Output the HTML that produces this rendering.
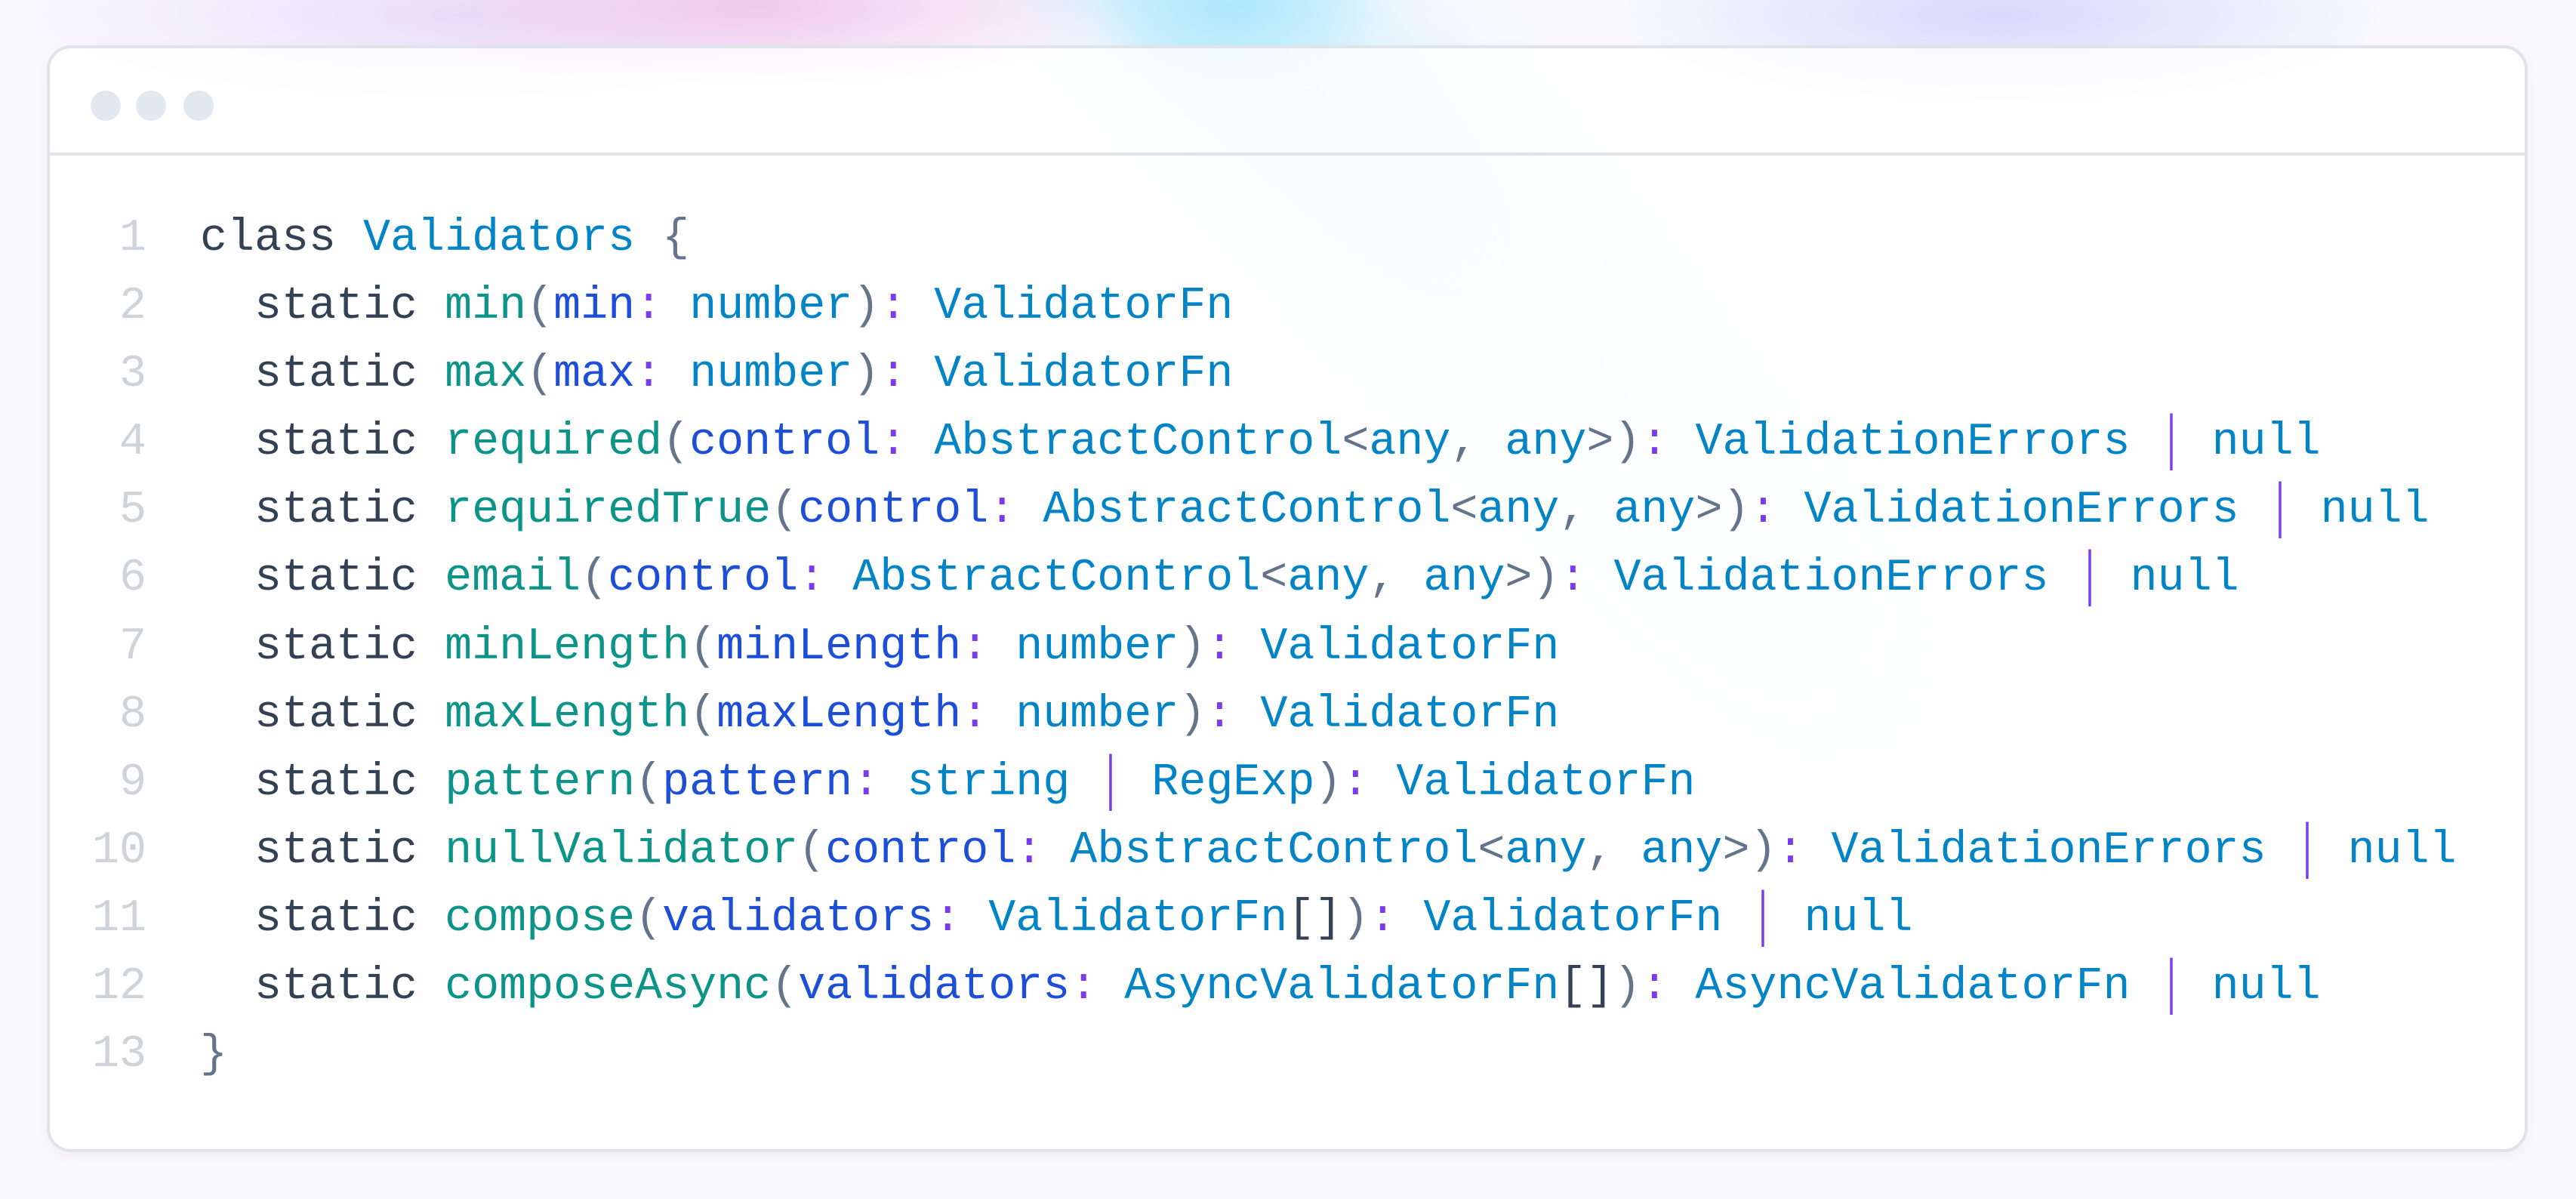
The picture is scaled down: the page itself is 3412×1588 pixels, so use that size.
<!DOCTYPE html>
<html><head><meta charset="utf-8">
<style>
html,body{margin:0;padding:0}
body{width:3412px;height:1588px;position:relative;overflow:hidden;
background:
radial-gradient(ellipse 700px 150px at 1000px 10px, rgba(240,195,235,0.85), transparent 75%),
radial-gradient(ellipse 800px 160px at 600px 20px, rgba(228,218,250,0.8), transparent 75%),
radial-gradient(ellipse 260px 150px at 1640px 10px, rgba(140,225,252,0.95), transparent 75%),
radial-gradient(ellipse 700px 160px at 2650px 20px, rgba(210,214,252,0.9), transparent 75%),
#f9f9fd;}
.streak{position:absolute;left:1850px;top:-700px;width:300px;height:2200px;transform:rotate(-42deg);transform-origin:50% 50%;
background:linear-gradient(180deg, rgba(150,225,252,0.9) 0%, rgba(200,238,252,0.6) 30%, rgba(230,245,253,0.3) 60%, transparent 90%);filter:blur(60px)}
.win{position:absolute;left:62px;top:60px;width:3286px;height:1466px;box-sizing:border-box;border:4px solid #dfe3ea;border-radius:32px;
background:rgba(255,255,255,0.78);
box-shadow:0 6px 20px rgba(0,0,0,0.04);}
.dot{position:absolute;top:56px;width:40px;height:40px;border-radius:50%;background:#e2e8f0}
.bar{position:absolute;left:0;right:0;top:138px;height:4px;background:#e2e4e8}
.code{position:absolute;left:0;top:207px;font-family:"Liberation Mono",monospace;font-size:60px;line-height:90.1px;white-space:pre;color:#334155}
.ln{display:inline-block;width:128px;text-align:right;color:#cfd4da;margin-right:71px}
.k{color:#334155}.c{color:#0284c7}.m{color:#0d9488}.p{color:#1d4ed8}.o{color:#7c3aed}.g{color:#64748b}
.b{color:#7c3aed;display:inline-block;transform:scale(0.7,1.35)}
</style></head><body>
<div class="streak"></div>
<div class="win">
<div class="dot" style="left:54px"></div><div class="dot" style="left:114px"></div><div class="dot" style="left:177px"></div>
<div class="bar"></div>
<div class="code"><div><span class="ln">1</span><span class="k">class</span> <span class="c">Validators</span> <span class="g">{</span></div><div><span class="ln">2</span>  <span class="k">static</span> <span class="m">min</span><span class="g">(</span><span class="p">min</span><span class="o">:</span> <span class="c">number</span><span class="g">)</span><span class="o">:</span> <span class="c">ValidatorFn</span></div><div><span class="ln">3</span>  <span class="k">static</span> <span class="m">max</span><span class="g">(</span><span class="p">max</span><span class="o">:</span> <span class="c">number</span><span class="g">)</span><span class="o">:</span> <span class="c">ValidatorFn</span></div><div><span class="ln">4</span>  <span class="k">static</span> <span class="m">required</span><span class="g">(</span><span class="p">control</span><span class="o">:</span> <span class="c">AbstractControl</span><span class="g">&lt;</span><span class="c">any</span><span class="g">,</span> <span class="c">any</span><span class="g">&gt;)</span><span class="o">:</span> <span class="c">ValidationErrors</span> <span class="b">|</span> <span class="c">null</span></div><div><span class="ln">5</span>  <span class="k">static</span> <span class="m">requiredTrue</span><span class="g">(</span><span class="p">control</span><span class="o">:</span> <span class="c">AbstractControl</span><span class="g">&lt;</span><span class="c">any</span><span class="g">,</span> <span class="c">any</span><span class="g">&gt;)</span><span class="o">:</span> <span class="c">ValidationErrors</span> <span class="b">|</span> <span class="c">null</span></div><div><span class="ln">6</span>  <span class="k">static</span> <span class="m">email</span><span class="g">(</span><span class="p">control</span><span class="o">:</span> <span class="c">AbstractControl</span><span class="g">&lt;</span><span class="c">any</span><span class="g">,</span> <span class="c">any</span><span class="g">&gt;)</span><span class="o">:</span> <span class="c">ValidationErrors</span> <span class="b">|</span> <span class="c">null</span></div><div><span class="ln">7</span>  <span class="k">static</span> <span class="m">minLength</span><span class="g">(</span><span class="p">minLength</span><span class="o">:</span> <span class="c">number</span><span class="g">)</span><span class="o">:</span> <span class="c">ValidatorFn</span></div><div><span class="ln">8</span>  <span class="k">static</span> <span class="m">maxLength</span><span class="g">(</span><span class="p">maxLength</span><span class="o">:</span> <span class="c">number</span><span class="g">)</span><span class="o">:</span> <span class="c">ValidatorFn</span></div><div><span class="ln">9</span>  <span class="k">static</span> <span class="m">pattern</span><span class="g">(</span><span class="p">pattern</span><span class="o">:</span> <span class="c">string</span> <span class="b">|</span> <span class="c">RegExp</span><span class="g">)</span><span class="o">:</span> <span class="c">ValidatorFn</span></div><div><span class="ln">10</span>  <span class="k">static</span> <span class="m">nullValidator</span><span class="g">(</span><span class="p">control</span><span class="o">:</span> <span class="c">AbstractControl</span><span class="g">&lt;</span><span class="c">any</span><span class="g">,</span> <span class="c">any</span><span class="g">&gt;)</span><span class="o">:</span> <span class="c">ValidationErrors</span> <span class="b">|</span> <span class="c">null</span></div><div><span class="ln">11</span>  <span class="k">static</span> <span class="m">compose</span><span class="g">(</span><span class="p">validators</span><span class="o">:</span> <span class="c">ValidatorFn</span><span class="k">[]</span><span class="g">)</span><span class="o">:</span> <span class="c">ValidatorFn</span> <span class="b">|</span> <span class="c">null</span></div><div><span class="ln">12</span>  <span class="k">static</span> <span class="m">composeAsync</span><span class="g">(</span><span class="p">validators</span><span class="o">:</span> <span class="c">AsyncValidatorFn</span><span class="k">[]</span><span class="g">)</span><span class="o">:</span> <span class="c">AsyncValidatorFn</span> <span class="b">|</span> <span class="c">null</span></div><div><span class="ln">13</span><span class="g">}</span></div></div>
</div>
</body></html>
